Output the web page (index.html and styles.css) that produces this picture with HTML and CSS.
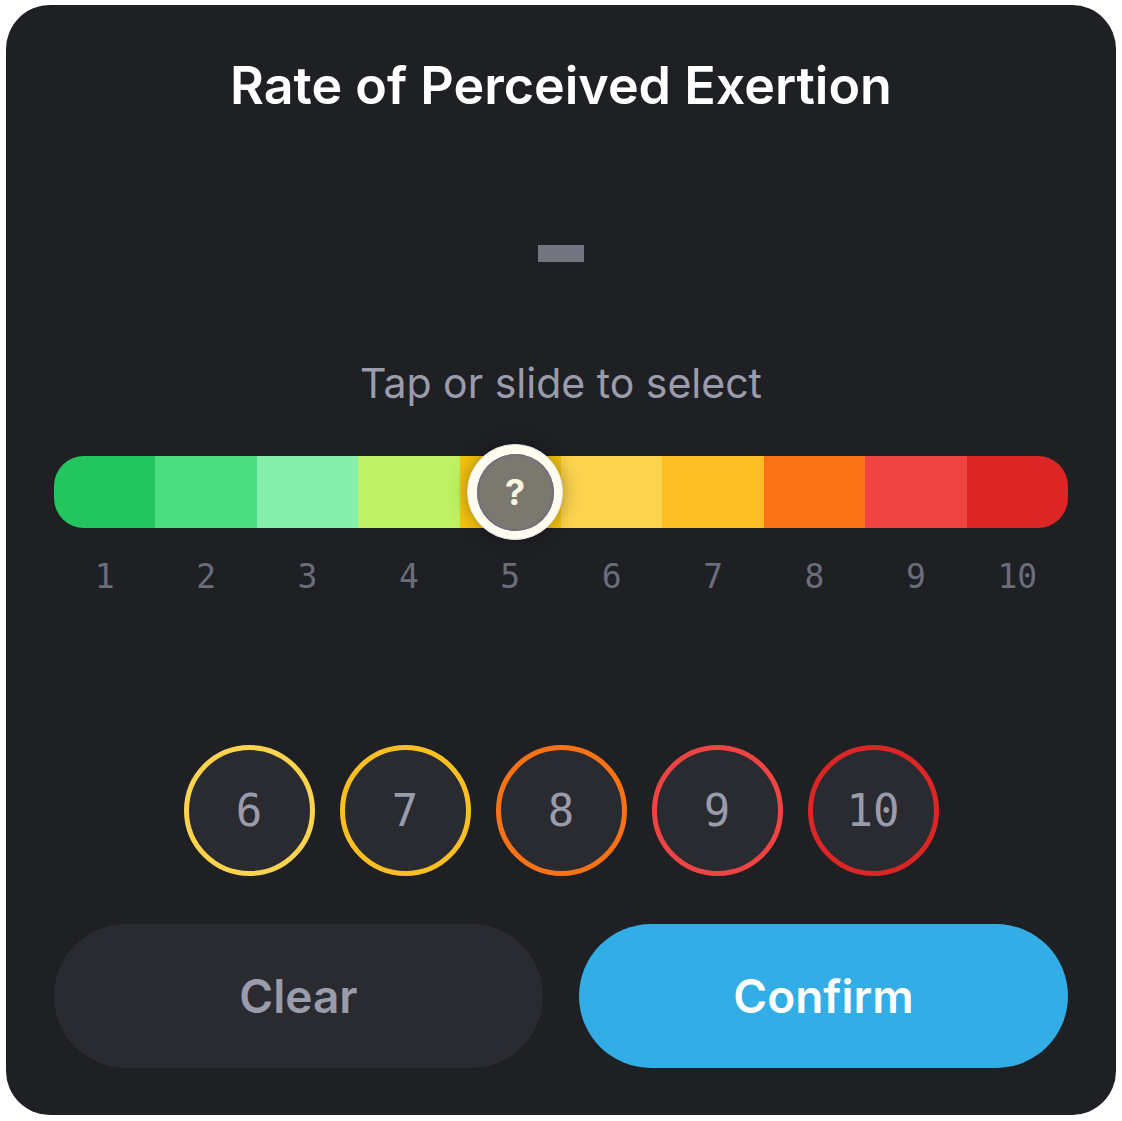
FILE: index.html
```html
<!DOCTYPE html>
<html lang="en">
<head>
<meta charset="utf-8">
<title>Rate of Perceived Exertion</title>
<link rel="stylesheet" href="styles.css">
</head>
<body>
<div class="card">
  <h1 class="title">Rate of Perceived Exertion</h1>
  <div class="value"><span class="dash" aria-label="no value"></span></div>
  <p class="hint">Tap or slide to select</p>
  <div class="track">
    <div class="seg s1"></div>
    <div class="seg s2"></div>
    <div class="seg s3"></div>
    <div class="seg s4"></div>
    <div class="seg s5"></div>
    <div class="seg s6"></div>
    <div class="seg s7"></div>
    <div class="seg s8"></div>
    <div class="seg s9"></div>
    <div class="seg s10"></div>
    <div class="thumb"><span class="thumb-inner">?</span></div>
  </div>
  <div class="labels">
    <span>1</span><span>2</span><span>3</span><span>4</span><span>5</span>
    <span>6</span><span>7</span><span>8</span><span>9</span><span>10</span>
  </div>
  <div class="quick">
    <div class="chip c6">6</div>
    <div class="chip c7">7</div>
    <div class="chip c8">8</div>
    <div class="chip c9">9</div>
    <div class="chip c10">10</div>
  </div>
  <div class="actions">
    <button class="btn btn-clear">Clear</button>
    <button class="btn btn-confirm">Confirm</button>
  </div>
</div>
</body>
</html>
```
FILE: styles.css
```css
html, body {
  margin: 0;
  padding: 0;
  background: #ffffff;
}
body {
  padding: 5px 6px;
}
.card {
  width: 1110px;
  height: 1110px;
  box-sizing: border-box;
  background: #1f2024;
  border-radius: 44px;
  padding: 51px 48px 0;
  display: flex;
  flex-direction: column;
  font-family: Inter, "Noto Sans", sans-serif;
}
.title {
  margin: 0;
  height: 60px;
  line-height: 60px;
  text-align: center;
  color: #ffffff;
  font-size: 52px;
  font-weight: 600;
  letter-spacing: 0;
}
.value {
  margin-top: 129px;
  height: 17px;
  display: flex;
  justify-content: center;
}
.dash {
  display: block;
  width: 46px;
  height: 17px;
  background: #74747f;
}
.hint {
  margin: 97px 0 0;
  height: 48px;
  line-height: 48px;
  text-align: center;
  color: #9a9cab;
  font-size: 41px;
  font-weight: 400;
}
.track {
  position: relative;
  margin-top: 49px;
  height: 72px;
  border-radius: 30px;
  overflow: visible;
  display: grid;
  grid-template-columns: repeat(10, 1fr);
}
.seg { height: 72px; }
.s1 { background: #22c55e; border-radius: 30px 0 0 30px; }
.s2 { background: #4ade80; }
.s3 { background: #86efac; }
.s4 { background: #bef264; }
.s5 { background: #f5c410; }
.s6 { background: #fcd34d; }
.s7 { background: #fbbf24; }
.s8 { background: #f97316; }
.s9 { background: #ef4444; }
.s10 { background: #dc2626; border-radius: 0 30px 30px 0; }
.thumb {
  position: absolute;
  left: 413px;
  top: -12px;
  width: 96px;
  height: 96px;
  box-sizing: border-box;
  border-radius: 50%;
  background: #fffdf0;
  border: 1px solid #e6e6e6;
  box-shadow: 0 0 18px rgba(0, 0, 0, 0.35);
  display: flex;
  align-items: center;
  justify-content: center;
}
.thumb-inner {
  width: 77px;
  height: 77px;
  border-radius: 50%;
  background: #7b786f;
  box-shadow: inset 0 0 0 1.5px #6e6f7e;
  display: flex;
  align-items: center;
  justify-content: center;
  color: #fbf6e0;
  font-size: 36px;
  font-weight: 700;
  line-height: 1;
}
.labels {
  margin-top: 29px;
  height: 40px;
  display: grid;
  grid-template-columns: repeat(10, 1fr);
  font-family: "DejaVu Sans Mono", monospace;
  font-size: 33px;
  line-height: 40px;
  color: #6b6d7a;
  text-align: center;
}
.quick {
  margin-top: 148px;
  display: flex;
  justify-content: center;
  gap: 25px;
}
.chip {
  width: 131px;
  height: 131px;
  box-sizing: border-box;
  border-radius: 50%;
  border: 5px solid;
  background: #2a2b31;
  display: flex;
  align-items: center;
  justify-content: center;
  font-family: "DejaVu Sans Mono", monospace;
  font-size: 44px;
  color: #9a9cab;
}
.c6 { border-color: #fcd34d; }
.c7 { border-color: #fbbf24; }
.c8 { border-color: #f97316; }
.c9 { border-color: #ef4444; }
.c10 { border-color: #dc2626; }
.actions {
  margin-top: 48px;
  display: flex;
  gap: 36px;
}
.btn {
  flex: 1;
  height: 144px;
  border: none;
  border-radius: 72px;
  font-family: Inter, "Noto Sans", sans-serif;
  font-size: 46px;
  font-weight: 600;
  padding: 0;
}
.btn-clear {
  background: #2a2b31;
  color: #9a9cab;
}
.btn-confirm {
  background: #32ade6;
  color: #ffffff;
}
```
